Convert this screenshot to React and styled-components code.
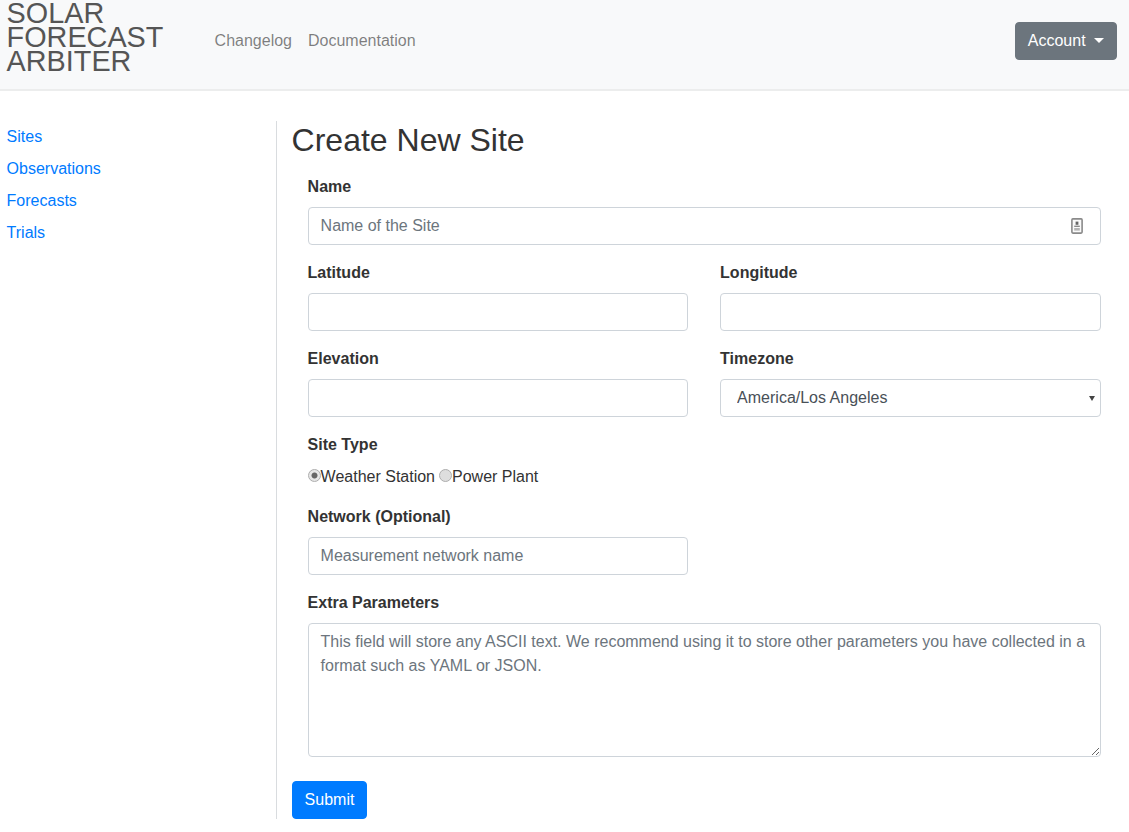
import React from "react";
import styled, { createGlobalStyle } from "styled-components";

const GlobalStyle = createGlobalStyle`
  * {
    box-sizing: border-box;
  }
  body {
    margin: 0;
    background: #fff;
    color: #212529;
    font-family: "Liberation Sans", Arial, sans-serif;
    font-size: 16px;
    line-height: 24px;
  }
`;

const sideLinks = ["Sites", "Observations", "Forecasts", "Trials"];

const ContactIcon = () => (
  <svg width="12" height="16" viewBox="0 0 12 16" aria-hidden="true">
    <rect x="0.9" y="0.9" width="10.2" height="14.2" rx="1" fill="#fafafa" stroke="#8a8a8a" strokeWidth="1.6" />
    <rect x="4.6" y="3.6" width="2.8" height="3.2" fill="#666" />
    <rect x="3.2" y="7.6" width="5.6" height="1.4" fill="#8a8a8a" />
    <rect x="3.2" y="10" width="5.6" height="2.6" fill="#b5b5b5" />
  </svg>
);

export default function App() {
  return (
    <>
      <GlobalStyle />
      <Header>
        <Brand href="#">SOLAR FORECAST ARBITER</Brand>
        <NavLinks>
          <NavItem href="#">Changelog</NavItem>
          <NavItem href="#">Documentation</NavItem>
        </NavLinks>
        <AccountButton type="button">Account</AccountButton>
      </Header>

      <Body>
        <Sidebar>
          {sideLinks.map((l) => (
            <SideLink href="#" key={l}>
              {l}
            </SideLink>
          ))}
        </Sidebar>

        <Main>
          <Title>Create New Site</Title>
          <Form onSubmit={(e) => e.preventDefault()}>
            <Group>
              <Label>Name</Label>
              <InputWrap>
                <Input placeholder="Name of the Site" />
                <InputIcon>
                  <ContactIcon />
                </InputIcon>
              </InputWrap>
            </Group>

            <Row>
              <Group>
                <Label>Latitude</Label>
                <Input />
              </Group>
              <Group>
                <Label>Longitude</Label>
                <Input />
              </Group>
            </Row>

            <Row>
              <Group>
                <Label>Elevation</Label>
                <Input />
              </Group>
              <Group>
                <Label>Timezone</Label>
                <SelectWrap>
                  <Select defaultValue="America/Los Angeles">
                    <option>America/Los Angeles</option>
                    <option>America/Denver</option>
                    <option>America/New York</option>
                  </Select>
                </SelectWrap>
              </Group>
            </Row>

            <Group>
              <Label>Site Type</Label>
              <RadioRow>
                <RadioLabel>
                  <Radio type="radio" name="site-type" defaultChecked />
                  Weather Station
                </RadioLabel>
                <RadioLabel>
                  <Radio type="radio" name="site-type" />
                  Power Plant
                </RadioLabel>
              </RadioRow>
            </Group>

            <Row>
              <Group>
                <Label>Network (Optional)</Label>
                <Input placeholder="Measurement network name" />
              </Group>
            </Row>

            <Group>
              <Label>Extra Parameters</Label>
              <TextArea placeholder="This field will store any ASCII text. We recommend using it to store other parameters you have collected in a format such as YAML or JSON." />
            </Group>
          </Form>
          <SubmitButton type="submit">Submit</SubmitButton>
        </Main>
      </Body>
    </>
  );
}

const Header = styled.nav`
  display: flex;
  align-items: center;
  height: 91px;
  padding: 0 12px 8px 6.6px;
  background-color: #f8f9fa;
  border-bottom: 2px solid #eceded;
`;
const Brand = styled.a`
  align-self: flex-start;
  width: 160px;
  margin: 1px 40px 0 0;
  color: #555;
  font-size: 28.8px;
  line-height: 24px;
  text-decoration: none;
`;
const NavLinks = styled.div`
  display: flex;
  flex: 1;
`;
const NavItem = styled.a`
  padding: 0 8px;
  color: rgba(0, 0, 0, 0.5);
  text-decoration: none;
`;
const AccountButton = styled.button`
  height: 38px;
  padding: 0 12px;
  color: #fff;
  background-color: #6c757d;
  border: 1px solid #6c757d;
  border-radius: 4px;
  font-family: inherit;
  font-size: 16px;
  line-height: 24px;
  &::after {
    content: "";
    display: inline-block;
    margin-left: 8.4px;
    vertical-align: 3px;
    border-top: 5px solid #fff;
    border-right: 5px solid transparent;
    border-left: 5px solid transparent;
  }
`;

const Body = styled.div`
  display: flex;
  padding: 30px 12px 0 6.6px;
`;
const Sidebar = styled.aside`
  display: flex;
  flex-direction: column;
  width: 270.4px;
  flex-shrink: 0;
  border-right: 1px solid #d9dcdf;
`;
const SideLink = styled.a`
  height: 32px;
  line-height: 32px;
  color: #007bff;
  text-decoration: none;
`;
const Main = styled.main`
  flex: 1;
  min-width: 0;
  padding-left: 15px;
`;
const Title = styled.h2`
  margin: 0 0 16px -0.4px;
  color: #333;
  font-size: 32px;
  font-weight: 500;
  line-height: 38px;
`;
const Form = styled.form`
  display: flex;
  flex-direction: column;
  gap: 16px;
  padding: 0 16.4px 0 15.6px;
`;
const Row = styled.div`
  display: grid;
  grid-template-columns: 1fr 1fr;
  column-gap: 32px;
`;
const Group = styled.div`
  display: flex;
  flex-direction: column;
  min-width: 0;
`;
const Label = styled.label`
  margin-bottom: 8px;
  color: #333;
  font-weight: 700;
`;
const InputWrap = styled.div`
  position: relative;
`;
const Input = styled.input`
  display: block;
  width: 100%;
  height: 38px;
  padding: 6px 12px;
  color: #495057;
  background: #fff;
  border: 1px solid #ced4da;
  border-radius: 4px;
  font-family: inherit;
  font-size: 16px;
  line-height: 24px;
  &::placeholder {
    color: #6c757d;
    opacity: 1;
  }
`;
const InputIcon = styled.span`
  position: absolute;
  top: 11px;
  right: 17.6px;
  display: flex;
`;
const SelectWrap = styled.div`
  position: relative;
  &::after {
    content: "";
    position: absolute;
    top: 17px;
    right: 6px;
    border-top: 5px solid #444;
    border-right: 3px solid transparent;
    border-left: 3px solid transparent;
    pointer-events: none;
  }
`;
const Select = styled.select`
  display: block;
  width: 100%;
  height: 38px;
  padding: 5px 16px 7px;
  color: #495057;
  background: #fff;
  border: 1px solid #ced4da;
  border-radius: 4px;
  font-family: inherit;
  font-size: 16px;
  appearance: none;
`;
const RadioRow = styled.div`
  display: flex;
  gap: 4px;
`;
const RadioLabel = styled.label`
  display: flex;
  align-items: center;
  color: #333;
`;
const Radio = styled.input`
  width: 13px;
  height: 13px;
  margin: 0 0 4px;
  border: 1px solid #adadad;
  border-radius: 50%;
  background: #dedede;
  appearance: none;
  &:checked {
    background: radial-gradient(circle, #666 0 2.6px, #e6e6e6 3.4px);
  }
`;
const TextArea = styled.textarea`
  display: block;
  width: 100%;
  height: 134px;
  padding: 6px 12px;
  color: #495057;
  background: #fff;
  border: 1px solid #ced4da;
  border-radius: 4px;
  font-family: inherit;
  font-size: 16px;
  line-height: 24px;
  &::placeholder {
    color: #6c757d;
    opacity: 1;
  }
`;
const SubmitButton = styled.button`
  display: block;
  height: 38px;
  margin: 24px 0 0 -0.4px;
  padding: 0 12px;
  color: #fff;
  background-color: #007bff;
  border: 1px solid #007bff;
  border-radius: 4px;
  font-family: inherit;
  font-size: 16px;
  line-height: 24px;
`;
